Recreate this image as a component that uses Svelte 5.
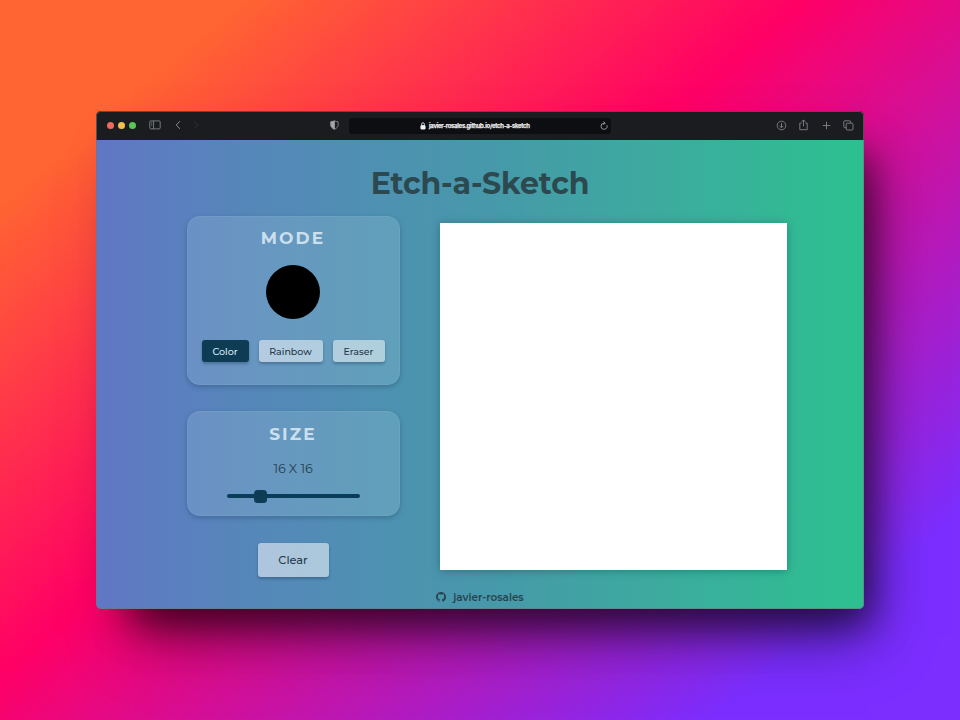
<script>
  let mode = $state('Color');
  let size = $state(16);
  const modes = [
    { name: 'Color', cls: 'color' },
    { name: 'Rainbow', cls: 'rainbow' },
    { name: 'Eraser', cls: 'eraser' }
  ];
</script>

<div class="scene">
  <div class="window">
    <header class="toolbar">
      <div class="left">
        <i class="dot red"></i><i class="dot yellow"></i><i class="dot green"></i>
        <svg class="sidebar" width="12" height="10" viewBox="0 0 12 10"><rect x=".8" y=".9" width="10.4" height="8" rx="1"/><path d="M4.6 1v8M2 3h1.300M2 5h1.300"/></svg>
        <svg class="back" width="6" height="10" viewBox="0 0 6 10"><path d="M5 1.2 1.2 5 5 8.8"/></svg>
        <svg class="forward" width="6" height="10" viewBox="0 0 6 10"><path d="M1 1.2 4.8 5 1 8.8"/></svg>
      </div>
      <svg class="shield" width="9" height="10" viewBox="0 0 9 10"><path d="M4.500.900C5.500 1.500 7 1.700 8.100 1.700v3.300C8.100 7 6.500 8.400 4.500 9.200 2.500 8.400.9 7 .9 5V1.700C2 1.700 3.500 1.500 4.500.9z"/><path class="solid" d="M4.500.9v8.300C2.500 8.400.9 7 .9 5V1.700C2 1.700 3.500 1.500 4.500.9z"/></svg>
      <div class="address">
        <svg class="lock" width="6" height="8" viewBox="0 0 6 8"><rect class="solid" x=".9" y="3.5" width="4.200" height="3.600" rx=".4"/><path d="M1.6 3.5V2.2a1.4 1.4 0 0 1 2.8 0v1.3"/></svg>
        <span>javier-rosales.github.io/etch-a-sketch</span>
        <svg class="reload" width="8" height="9" viewBox="0 0 8 9"><path d="M6.900 4.200A3 3 0 1 1 4 2.200h.8M3.600.5 5.200 2.200 3.600 3.800"/></svg>
      </div>
      <div class="right">
        <svg width="11" height="11" viewBox="0 0 11 11"><circle cx="5.5" cy="5.5" r="4.3"/><path d="M5.5 3v4.6M3.7 5.9l1.8 1.8 1.8-1.8"/></svg>
        <svg width="11" height="12" viewBox="0 0 11 12"><path d="M3.7 4.1H1.8v6.6h7.4V4.1H7.3M5.5 7.3V1M3.6 2.8 5.5.9l1.9 1.9"/></svg>
        <svg width="11" height="11" viewBox="0 0 11 11"><path d="M5.5 1.8v7.4M1.8 5.5h7.4"/></svg>
        <svg width="11" height="11" viewBox="0 0 11 11"><path d="M3 7.7H1.8a1 1 0 0 1-1-1V1.8a1 1 0 0 1 1-1h4.9a1 1 0 0 1 1 1V3"/><rect x="3.2" y="3.2" width="6.8" height="6.8" rx="1"/></svg>
      </div>
    </header>

    <main>
      <h1>Etch-a-Sketch</h1>
      <div class="content">
        <aside>
          <section class="panel mode">
            <h2>MODE</h2>
            <div class="swatch"></div>
            <div class="modes">
              {#each modes as m}
                <button class={m.cls} class:active={mode === m.name} onclick={() => (mode = m.name)}>{m.name}</button>
              {/each}
            </div>
          </section>
          <section class="panel size">
            <h2>SIZE</h2>
            <p>{size} X {size}</p>
            <input type="range" min="1" max="64" bind:value={size} />
          </section>
          <button class="clear">Clear</button>
        </aside>
        <div class="board"></div>
      </div>
      <footer>
        <svg width="10" height="10" viewBox="0 0 16 16"><path class="mark" d="M8 0C3.580 0 0 3.580 0 8c0 3.540 2.290 6.530 5.470 7.590.4.070.55-.170.55-.380 0-.190-.010-.820-.010-1.490-2.010.370-2.530-.490-2.690-.940-.090-.230-.480-.940-.820-1.130-.280-.150-.680-.520-.010-.530.630-.010 1.080.580 1.230.820.720 1.210 1.870.870 2.330.660.070-.520.280-.870.510-1.070-1.780-.200-3.640-.890-3.640-3.950 0-.870.310-1.590.820-2.150-.080-.200-.360-1.020.080-2.120 0 0 .670-.210 2.200.820.640-.180 1.320-.270 2-.270s1.360.090 2 .270c1.530-1.040 2.200-.820 2.200-.820.440 1.100.160 1.920.080 2.120.510.560.820 1.270.820 2.150 0 3.070-1.870 3.750-3.650 3.950.290.250.540.730.540 1.480 0 1.070-.010 1.930-.010 2.200 0 .210.150.460.550.380A8.010 8.010 0 0 0 16 8c0-4.420-3.580-8-8-8z"/></svg>
        <span>javier-rosales</span>
      </footer>
    </main>
  </div>
</div>

<style>
  :global(body) { margin: 0; }
  * { box-sizing: border-box; }
  .scene {
    width: 960px; height: 720px; overflow: hidden;
    padding: 111px 96px;
    background: linear-gradient(140deg, #ff6432 13.5%, #ff0065 44.2%, #7b2eff 86.5%);
    font-family: Montserrat, Inter, sans-serif;
  }
  .window {
    width: 768px; height: 498px; border-radius: 5px; overflow: hidden; position: relative;
    box-shadow: 20px 28px 34px -14px rgba(0, 0, 0, .5), 22px 42px 56px -16px rgba(0, 0, 0, .5);
    display: flex; flex-direction: column;
  }
  .window::after {
    content: ''; position: absolute; inset: 0; border-radius: 5px; pointer-events: none;
    border: 1px solid rgba(120, 115, 120, .6);
  }
  .toolbar {
    height: 29px; flex: none; background: #1a1c1f; padding-bottom: 1px;
    display: flex; align-items: center; color: #858a8f;
  }
  svg { fill: none; stroke: currentColor; stroke-width: .85; flex: none; }
  .solid { fill: currentColor; }
  .left { display: flex; align-items: center; width: 234px; padding-left: 11px; }
  .dot { width: 7px; height: 7px; border-radius: 50%; margin-right: 4px; }
  .red { background: #ed6a5e; }
  .yellow { background: #f4be4f; }
  .green { background: #5ac454; }
  .sidebar { margin-left: 9px; }
  .back { margin-left: 14px; color: #a3a6a9; }
  .forward { margin-left: 12px; color: #303336; }
  .shield { color: #a3a6a9; stroke-width: .7; }
  .address {
    width: 262px; height: 16px; margin: 1px 0 0 10px; border-radius: 3px; background: #0c0e12;
    display: flex; align-items: center; color: #f0f0f0;
    padding: 0 3px 0 71px;
  }
  .address span {
    font: 600 6px/16px Inter, sans-serif; letter-spacing: -.26px; white-space: nowrap; margin-left: 3px;
    -webkit-text-stroke: .25px #f0f0f0;
  }
  .reload { margin-left: auto; color: #aeb1b4; }
  .right { display: flex; align-items: center; gap: 11.4px; margin-left: auto; padding-right: 10px; }
  main {
    flex: 1; display: flex; flex-direction: column; align-items: center;
    background: linear-gradient(90deg, #6078c4 2%, #5785bb 17%, #4f90b3 35%, #4699a9 52%, #3daa9f 72%, #2ebf91 98%);
    color: #27444f;
  }
  h1 { margin: 25px 0 0; font-size: 30px; line-height: 38px; font-weight: 700; letter-spacing: -.1px; white-space: nowrap; color: #2c4950; }
  .content { display: flex; gap: 40px; margin: 13px 0 0 13px; height: 362px; align-items: flex-start; }
  aside { width: 213px; display: flex; flex-direction: column; align-items: center; }
  .panel {
    width: 213px; border-radius: 13px; background: rgba(235, 255, 245, .13);
    border: 1px solid rgba(255, 255, 255, .06);
    box-shadow: 0 2px 5px rgba(20, 50, 80, .3);
    display: flex; flex-direction: column; align-items: center;
  }
  .mode { height: 169px; }
  .size { height: 105px; margin-top: 26px; }
  h2 { margin: 10px 0 0; font-size: 17px; line-height: 22px; font-weight: 700; letter-spacing: 2.1px; color: #ccdfed; }
  .size h2 { margin-top: 11px; }
  .swatch { width: 54px; height: 54px; margin-top: 16px; border-radius: 50%; background: #000; }
  .modes { display: flex; gap: 10px; margin-top: 21px; }
  button {
    border: 0; padding: 0; border-radius: 3px; font: 500 9.5px/23px Montserrat, Inter, sans-serif;
    height: 22px; background: rgba(255, 255, 255, .5); color: #26384b; box-shadow: 0 2px 3px rgba(20, 50, 80, .35);
  }
  .color { width: 47px; }
  .rainbow { width: 64px; }
  .eraser { width: 52px; }
  .modes .active { background: #0e3c55; color: #d6eaf4; }
  .size p { margin: 15px 0 0; font-size: 12.8px; line-height: 18px; letter-spacing: -.1px; color: #27404f; }
  input { appearance: none; width: 133px; height: 4px; margin: 16px 0 0; border-radius: 2px; background: #093d5a; }
  input::-webkit-slider-thumb { appearance: none; width: 13px; height: 13px; border-radius: 3.5px; background: #0e3c55; margin-left: -1px; }
  .clear { width: 71px; height: 34px; margin: 27px 0 0; font-size: 11.3px; line-height: 35px; background: rgba(255, 255, 255, .52); }
  .board { width: 347px; height: 347px; margin-top: 7px; background: #fff; box-shadow: 0 1px 8px rgba(20, 60, 70, .4); }
  footer { display: flex; align-items: center; gap: 7px; height: 16px; margin-top: 11px; font-size: 10.4px; font-weight: 600; }
  .mark { fill: currentColor; stroke: none; }
</style>
